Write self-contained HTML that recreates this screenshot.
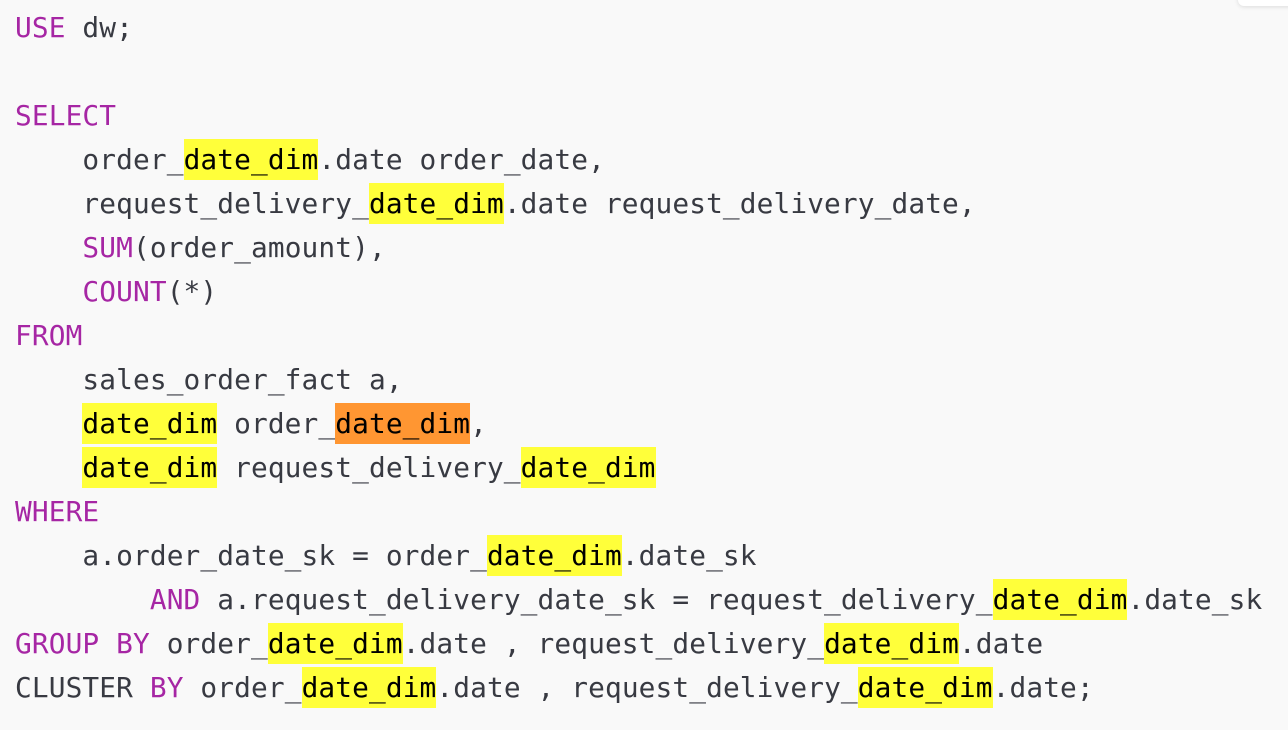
<!DOCTYPE html>
<html><head><style>
html,body{margin:0;padding:0;background:#f9f9f9;width:1288px;height:730px;overflow:hidden;position:relative}
pre{margin:0;position:absolute;left:15px;top:6px;font-family:"DejaVu Sans Mono","Liberation Mono",monospace;font-size:27.8px;letter-spacing:0.12px;line-height:44px;color:#383a42}
.k{color:#a626a4}
.y{background:#ffff3a;color:#000;padding:4px 0}
.o{background:#ff9632;color:#000;padding:4px 0}
.box{position:absolute;left:1238px;top:-10px;width:70px;height:16px;background:#fff;border-radius:6px;box-shadow:0 1px 4px rgba(0,0,0,.12)}
</style></head><body>
<div class="box"></div>
<pre><span class="k">USE</span> dw;

<span class="k">SELECT</span>
    order_<span class="y">date_dim</span>.date order_date,
    request_delivery_<span class="y">date_dim</span>.date request_delivery_date,
    <span class="k">SUM</span>(order_amount),
    <span class="k">COUNT</span>(*)
<span class="k">FROM</span>
    sales_order_fact a,
    <span class="y">date_dim</span> order_<span class="o">date_dim</span>,
    <span class="y">date_dim</span> request_delivery_<span class="y">date_dim</span>
<span class="k">WHERE</span>
    a.order_date_sk = order_<span class="y">date_dim</span>.date_sk
        <span class="k">AND</span> a.request_delivery_date_sk = request_delivery_<span class="y">date_dim</span>.date_sk
<span class="k">GROUP BY</span> order_<span class="y">date_dim</span>.date , request_delivery_<span class="y">date_dim</span>.date
CLUSTER <span class="k">BY</span> order_<span class="y">date_dim</span>.date , request_delivery_<span class="y">date_dim</span>.date;</pre>
</body></html>
